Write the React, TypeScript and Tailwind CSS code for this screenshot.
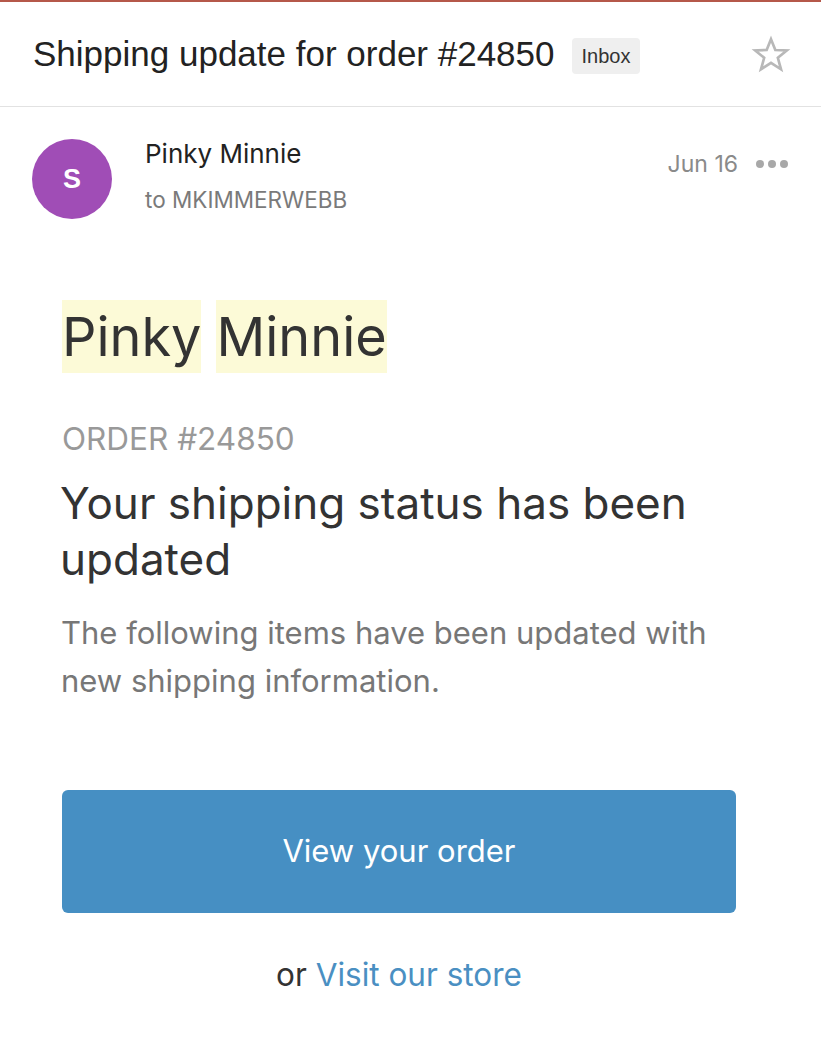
import React from 'react';

const StarIcon = () => (
  <svg width="40" height="40" viewBox="0 0 24 24" fill="none" stroke="#b8b8b8" strokeWidth="1.6" strokeLinejoin="miter">
    <polygon points="12,2.5 14.6,9 21.5,9.3 16.1,13.7 18,20.6 12,16.7 6,20.6 7.9,13.7 2.5,9.3 9.4,9" />
  </svg>
);

const MoreDots = () => (
  <div className="flex items-center gap-[4px]">
    <span className="w-[8px] h-[8px] rounded-full bg-[#a8a8a8]" />
    <span className="w-[8px] h-[8px] rounded-full bg-[#a8a8a8]" />
    <span className="w-[8px] h-[8px] rounded-full bg-[#a8a8a8]" />
  </div>
);

export default function App() {
  return (
    <div className="w-[821px] h-[1040px] bg-white overflow-hidden font-['Inter','Liberation_Sans',sans-serif]">
      <div className="h-[2px] bg-[#b5584a]" />

      {/* Subject header */}
      <div className="flex items-center h-[105px] pl-[33px] pr-[30px] border-b border-[#e2e2e2]">
        <h1 className="text-[35px] text-[#222] font-['Liberation_Sans',sans-serif]">
          Shipping update for order #24850
        </h1>
        <span className="ml-[17px] mt-[4px] px-[10px] h-[36px] flex items-center rounded-[4px] bg-[#efefef] text-[20px] text-[#333] font-['Liberation_Sans',sans-serif]">
          Inbox
        </span>
        <div className="ml-auto mt-[1px]">
          <StarIcon />
        </div>
      </div>

      {/* Sender row */}
      <div className="flex pl-[32px] pr-[33px] pt-[32px]">
        <div className="w-[80px] h-[80px] rounded-full bg-[#a04db6] flex items-center justify-center text-white text-[27px] font-semibold font-['Liberation_Sans',sans-serif]">
          S
        </div>
        <div className="ml-[33px] flex flex-col">
          <span className="text-[26px] text-[#222] leading-[30px]">Pinky Minnie</span>
          <span className="text-[22.5px] text-[#7a7a7a] leading-[26px] mt-[18px]">to MKIMMERWEBB</span>
        </div>
        <div className="ml-auto flex items-center h-[50px] gap-[18px]">
          <span className="text-[23px] text-[#8a8a8a]">Jun 16</span>
          <MoreDots />
        </div>
      </div>

      {/* Body */}
      <div className="pl-[62px] pr-[80px] pt-[81px]">
        <div className="flex gap-[15px]">
          <span className="bg-[#fcfad7] text-[54px] leading-[73px] text-[#333]">Pinky</span>
          <span className="bg-[#fcfad7] text-[54px] leading-[73px] text-[#333]">Minnie</span>
        </div>

        <p className="mt-[46px] text-[31.5px] leading-[40px] text-[#999]">ORDER #24850</p>

        <h2 className="mt-[16px] text-[44px] leading-[56px] text-[#333] -ml-[2px]">
          Your shipping status has been updated
        </h2>

        <p className="mt-[22px] text-[31px] leading-[48px] text-[#777] -ml-[1px]">
          The following items have been updated with new shipping information.
        </p>

        <button className="mt-[85px] w-[674px] h-[123px] rounded-[6px] bg-[#468fc3] text-white text-[31px] flex items-center justify-center">
          View your order
        </button>

        <p className="mt-[38px] w-[674px] text-center text-[31.5px] leading-[48px] text-[#333]">
          or <span className="text-[#4a8fc2]">Visit our store</span>
        </p>
      </div>
    </div>
  );
}
